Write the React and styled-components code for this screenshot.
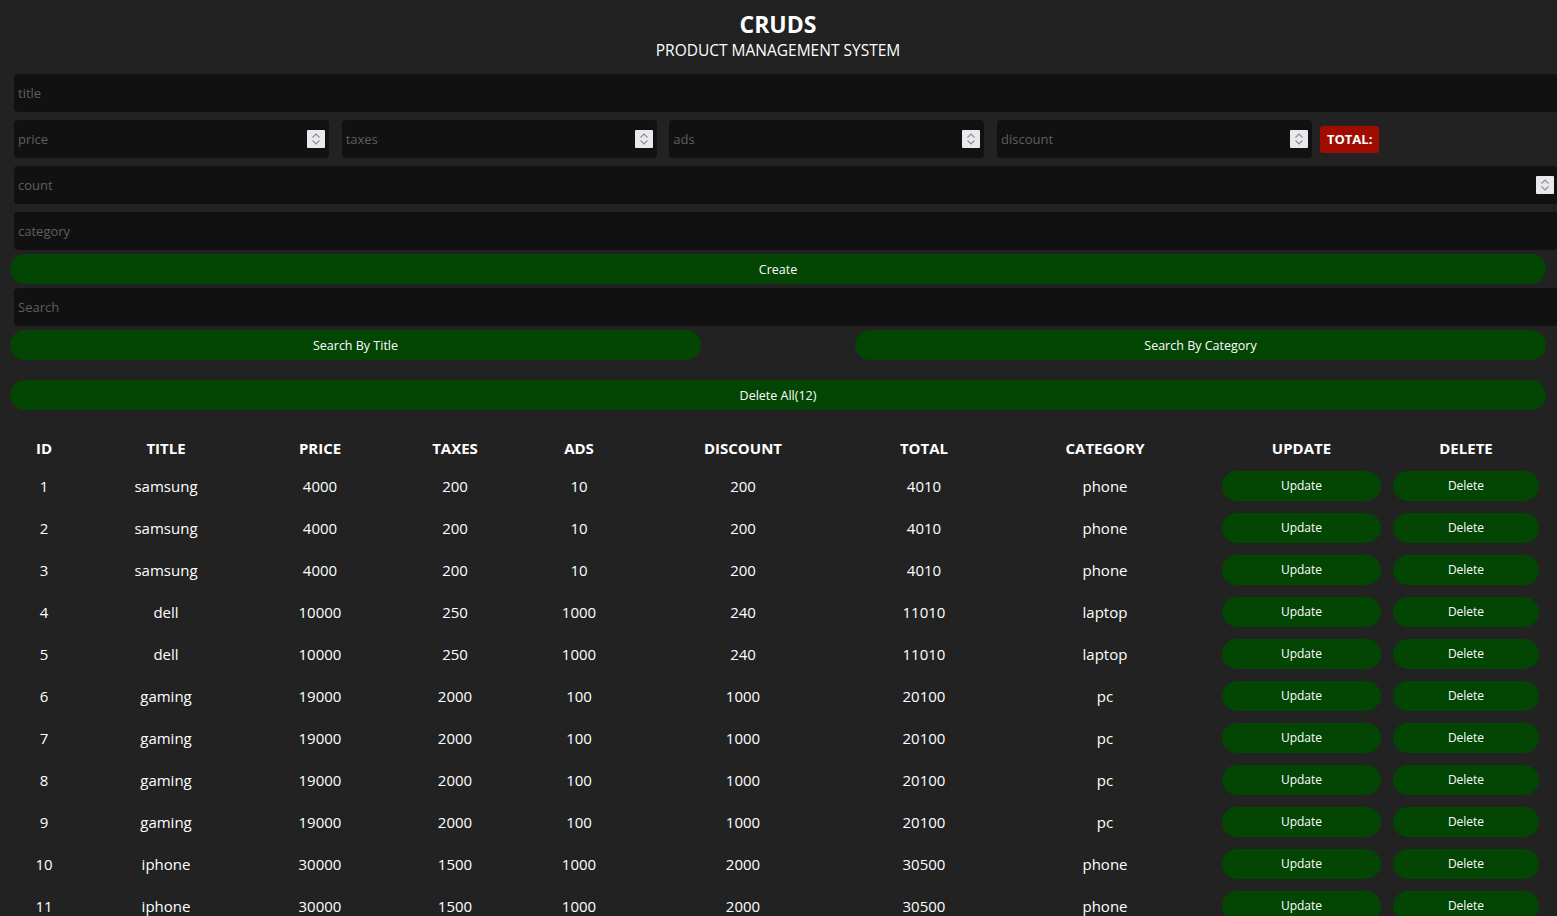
import React from 'react';
import styled, { createGlobalStyle } from 'styled-components';

const GlobalStyle = createGlobalStyle`
  html, body {
    margin: 0;
    padding: 0;
    background: #222;
    color: #fff;
    overflow-x: hidden;
    font-family: "Open Sans", "Noto Sans", sans-serif;
  }
  * { box-sizing: border-box; }
`;

const Page = styled.div`
  width: 1536px;
  margin-left: 10px;
`;

const Head = styled.header`
  text-align: center;
  height: 70px;
  padding-top: 8px;
`;

const Title = styled.h2`
  margin: 0;
  font-size: 23px;
  font-weight: 700;
  line-height: 32px;
`;

const Subtitle = styled.p`
  margin: 0;
  font-size: 15.5px;
  line-height: 22px;
  margin-top: -1px;
`;

const Form = styled.div`
  display: flex;
  flex-direction: column;
`;

const Field = styled.div`
  position: relative;
  width: ${p => p.w || 'calc(100% + 8px)'};
  margin: 4px 0 4px ${p => (p.inRow ? '0' : '4px')};
`;

const Input = styled.input`
  display: block;
  width: 100%;
  height: 38px;
  border: none;
  outline: none;
  background: #111;
  border-radius: 4px;
  padding: 4px;
  color: #fff;
  font-family: inherit;
  font-size: 13px;
  &::placeholder { color: #5f5f5f; }
  &::-webkit-inner-spin-button,
  &::-webkit-outer-spin-button { -webkit-appearance: none; margin: 0; }
  -moz-appearance: textfield;
`;

const Spin = styled.svg`
  position: absolute;
  right: 4px;
  top: 50%;
  margin-top: -9px;
  width: 18px;
  height: 18px;
  background: #e9e9ed;
  border-radius: 1px;
`;

const PriceRow = styled.div`
  display: flex;
  align-items: center;
  gap: 12.67px;
  margin-left: 4px;
`;

const Total = styled.small`
  margin-left: -4.67px;
  background: #a00d00;
  color: #fff;
  font-weight: 700;
  font-size: 13px;
  line-height: 27px;
  height: 27px;
  padding: 0 7px;
  border-radius: 3px;
`;

const Button = styled.button`
  display: block;
  width: ${p => p.w || '100%'};
  height: 30px;
  border: none;
  border-radius: 20px;
  background: #034503;
  color: #fff;
  font-family: inherit;
  font-size: 12.5px;
  cursor: pointer;
  margin-top: ${p => p.mt || 0}px;
`;

const SearchRow = styled.div`
  display: flex;
  justify-content: space-between;
`;

const Table = styled.table`
  margin-top: 21px;
  table-layout: fixed;
  width: 1533px;
  border-collapse: collapse;
  text-align: center;
`;

const Th = styled.th`
  height: 34px;
  padding: 0;
  font-size: 15px;
  font-weight: 700;
  text-transform: uppercase;
`;

const Td = styled.td`
  height: 42px;
  padding: 0 ${p => p.px || 0}px;
  font-size: 15px;
  vertical-align: middle;
`;

const RowButton = styled(Button)`
  font-size: 12px;
  margin-top: -1px;
`;

const Spinner = () => (
  <Spin viewBox="0 0 18 18">
    <path d="M5.5 7.5 L9 4 L12.5 7.5" fill="none" stroke="#8c8c96" strokeWidth="1.1" />
    <path d="M5.5 10.5 L9 14 L12.5 10.5" fill="none" stroke="#8c8c96" strokeWidth="1.1" />
  </Spin>
);

const NumberField = ({ placeholder, w, inRow }) => (
  <Field w={w} inRow={inRow}>
    <Input type="number" placeholder={placeholder} />
    <Spinner />
  </Field>
);

const cols = [68, 176, 132, 138, 110, 218, 144, 218, 175, 154];
const headers = ['id', 'title', 'price', 'taxes', 'ads', 'discount', 'total', 'category', 'update', 'delete'];

const products = [
  ['samsung', 4000, 200, 10, 200, 4010, 'phone'],
  ['samsung', 4000, 200, 10, 200, 4010, 'phone'],
  ['samsung', 4000, 200, 10, 200, 4010, 'phone'],
  ['dell', 10000, 250, 1000, 240, 11010, 'laptop'],
  ['dell', 10000, 250, 1000, 240, 11010, 'laptop'],
  ['gaming', 19000, 2000, 100, 1000, 20100, 'pc'],
  ['gaming', 19000, 2000, 100, 1000, 20100, 'pc'],
  ['gaming', 19000, 2000, 100, 1000, 20100, 'pc'],
  ['gaming', 19000, 2000, 100, 1000, 20100, 'pc'],
  ['iphone', 30000, 1500, 1000, 2000, 30500, 'phone'],
  ['iphone', 30000, 1500, 1000, 2000, 30500, 'phone'],
  ['iphone', 30000, 1500, 1000, 2000, 30500, 'phone'],
];

export default function App() {
  return (
    <>
      <GlobalStyle />
      <Page>
        <Head>
          <Title>CRUDS</Title>
          <Subtitle>PRODUCT MANAGEMENT SYSTEM</Subtitle>
        </Head>
        <Form>
          <Field>
            <Input type="text" placeholder="title" />
          </Field>
          <PriceRow>
            <NumberField placeholder="price" w="315px" inRow />
            <NumberField placeholder="taxes" w="315px" inRow />
            <NumberField placeholder="ads" w="315px" inRow />
            <NumberField placeholder="discount" w="315px" inRow />
            <Total>TOTAL:</Total>
          </PriceRow>
          <NumberField placeholder="count" />
          <Field>
            <Input type="text" placeholder="category" />
          </Field>
          <Button>Create</Button>
          <Field>
            <Input type="text" placeholder="Search" />
          </Field>
          <SearchRow>
            <Button w="691px">Search By Title</Button>
            <Button w="691px">Search By Category</Button>
          </SearchRow>
          <Button mt={20}>Delete All(12)</Button>
        </Form>
        <Table>
          <colgroup>
            {cols.map((w, i) => <col key={i} style={{ width: w }} />)}
          </colgroup>
          <thead>
            <tr>
              {headers.map(h => <Th key={h}>{h}</Th>)}
            </tr>
          </thead>
          <tbody>
            {products.map((p, i) => (
              <tr key={i}>
                <Td>{i + 1}</Td>
                {p.map((v, j) => <Td key={j}>{v}</Td>)}
                <Td px={8}><RowButton>Update</RowButton></Td>
                <Td px={4}><RowButton>Delete</RowButton></Td>
              </tr>
            ))}
          </tbody>
        </Table>
      </Page>
    </>
  );
}
